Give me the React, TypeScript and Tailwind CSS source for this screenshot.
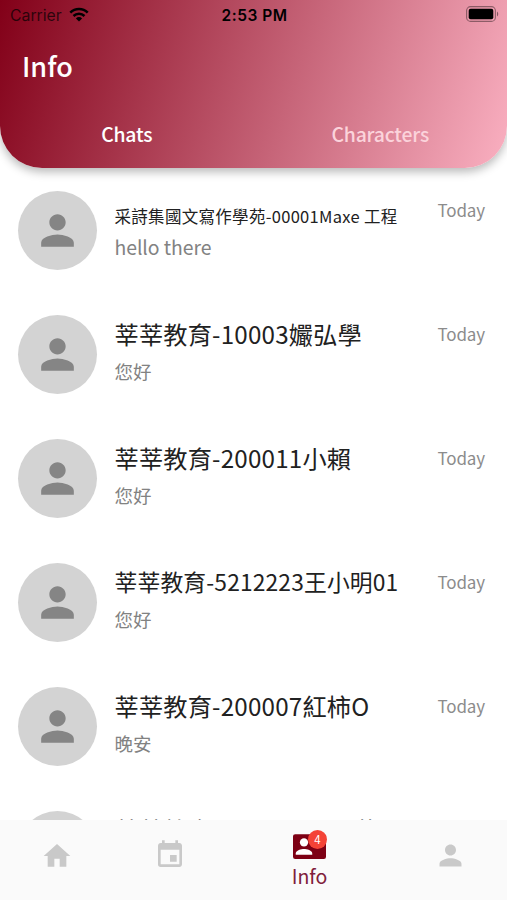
import React, { useState } from "react";
import { MdEvent, MdHome, MdPerson } from "react-icons/md";

interface Chat {
  title: string;
  message: string;
  date: string;
  titleClass?: string;
  messageClass?: string;
}

const chats: Chat[] = [
  {
    title: "采詩集國文寫作學苑-00001Maxe 工程",
    message: "hello there",
    date: "Today",
    titleClass: "text-[16.5px] leading-[30px] mt-[9px] tracking-[0.3px]",
    messageClass: "mt-[2px] text-[19.4px] -tracking-[0.05px]",
  },
  { title: "莘莘教育-10003孍弘學", message: "您好", date: "Today" },
  { title: "莘莘教育-200011小賴", message: "您好", date: "Today" },
  {
    title: "莘莘教育-5212223王小明01",
    message: "您好",
    date: "Today",
    titleClass: "text-[22.8px] leading-[36px] tracking-[0.15px]",
  },
  { title: "莘莘教育-200007紅柿O", message: "晚安", date: "Today" },
  { title: "莘莘教育-10020008小花", message: "您好", date: "Today" },
];

const StatusBar: React.FC = () => (
  <div className="grid h-[30px] grid-cols-3 items-center pl-[10px] pr-[8px] font-[Inter,sans-serif] text-[15.5px] text-black">
    <div className="flex items-center gap-[7px] pt-[1px] text-black/70">
      <span className="text-[15.8px]">Carrier</span>
      <svg width="20" height="15" viewBox="0 0 20 15" className="-mt-[2px] text-black">
        <path d="M1.3 5.6a12.4 12.4 0 0 1 17.4 0" fill="none" stroke="currentColor" strokeWidth="2.6" />
        <path d="M4.5 9a7.8 7.8 0 0 1 11 0" fill="none" stroke="currentColor" strokeWidth="2.5" />
        <path d="M10 14.5 6.9 11.4a4.4 4.4 0 0 1 6.2 0z" fill="currentColor" />
      </svg>
    </div>
    <span className="pt-[1px] text-center font-semibold tracking-[0.5px]">2:53 PM</span>
    <div className="flex justify-end">
      <svg width="33" height="16" viewBox="0 0 33 16" className="-mt-[2px]">
        <rect x="0.6" y="0.6" width="28.8" height="14.8" rx="4" fill="none" stroke="#000" strokeOpacity="0.4" strokeWidth="1.1" />
        <rect x="2.7" y="2.8" width="24.6" height="10.4" rx="2" fill="#000" />
        <path d="M31 5.5c1.6.7 1.6 4.3 0 5z" fill="#000" fillOpacity="0.45" />
      </svg>
    </div>
  </div>
);

const ContactIcon: React.FC = () => (
  <svg width="33" height="33" viewBox="0 0 24 24">
    <rect y="3" width="24" height="18" rx="1.6" fill="#7d0014" />
    <circle cx="8" cy="9" r="3" fill="#fff" />
    <path d="M14 18H2v-1c0-2 4-3.1 6-3.1s6 1.1 6 3.1v1z" fill="#fff" />
  </svg>
);

const ChatRow: React.FC<{ chat: Chat }> = ({ chat }) => (
  <li className="flex h-[124px] shrink-0 items-center pl-[18px] pr-[22px]">
    <div className="flex size-[79px] shrink-0 items-center justify-center rounded-full bg-[#d3d3d3]">
      <MdPerson className="size-[49px] text-[#858585]" />
    </div>
    <div className="-mt-[8px] ml-[17.5px] flex min-w-0 flex-1 flex-col whitespace-nowrap">
      <span className={`text-[#212121] ${chat.titleClass ?? "text-[24.2px] leading-[36px] tracking-[0.2px]"}`}>
        {chat.title}
      </span>
      <span className={`leading-[28px] text-[#828282] ${chat.messageClass ?? "mt-[5px] text-[18.5px]"}`}>
        {chat.message}
      </span>
    </div>
    <span className="mt-[29px] self-start text-[17px] leading-[26px] -tracking-[0.15px] text-[#8c8c8c]">
      {chat.date}
    </span>
  </li>
);

const App: React.FC = () => {
  const [tab, setTab] = useState("Chats");

  return (
    <div className="flex h-[900px] w-[507px] flex-col overflow-hidden bg-white font-['Noto_Sans_CJK_TC',sans-serif]">
      <header className="z-10 h-[168px] shrink-0 rounded-b-[42px] bg-[linear-gradient(108.3deg,#820018,#fab0c1)] shadow-[0_4px_10px_rgba(0,0,0,0.28)]">
        <StatusBar />
        <h1 className="mt-[17px] pl-[22px] text-[27px] leading-[38px] font-medium text-white">Info</h1>
        <nav className="mt-[31px] grid grid-cols-2">
          {["Chats", "Characters"].map((name) => (
            <button
              key={name}
              onClick={() => setTab(name)}
              className={`text-[19.4px] leading-[36px] font-medium -tracking-[0.2px] ${
                tab === name ? "text-white" : "text-[#fbd3db]"
              }`}
            >
              {name}
            </button>
          ))}
        </nav>
      </header>

      <ul className="flex min-h-0 flex-1 flex-col overflow-hidden">
        {chats.map((chat) => (
          <ChatRow key={chat.title} chat={chat} />
        ))}
      </ul>

      <footer className="grid h-[80px] shrink-0 grid-cols-[114px_111px_169px_113px] bg-[#fafafa] text-[#c9c9c9]">
        <button className="flex items-start justify-center pt-[20px]">
          <MdHome className="size-[32px]" />
        </button>
        <button className="flex items-start justify-center pt-[19px]">
          <MdEvent className="size-[32px]" />
        </button>
        <button className="flex flex-col items-center pt-[10px]">
          <div className="relative">
            <ContactIcon />
            <span className="absolute top-0 left-[15px] flex size-[19px] items-center justify-center rounded-full bg-[#f44336] text-[11.5px] leading-none text-white">
              4
            </span>
          </div>
          <span className="-mt-[1px] text-[19.5px] leading-[28px] text-[#80213b]">Info</span>
        </button>
        <button className="flex items-start justify-center pt-[19px]">
          <MdPerson className="size-[33px]" />
        </button>
      </footer>
    </div>
  );
};

export default App;
